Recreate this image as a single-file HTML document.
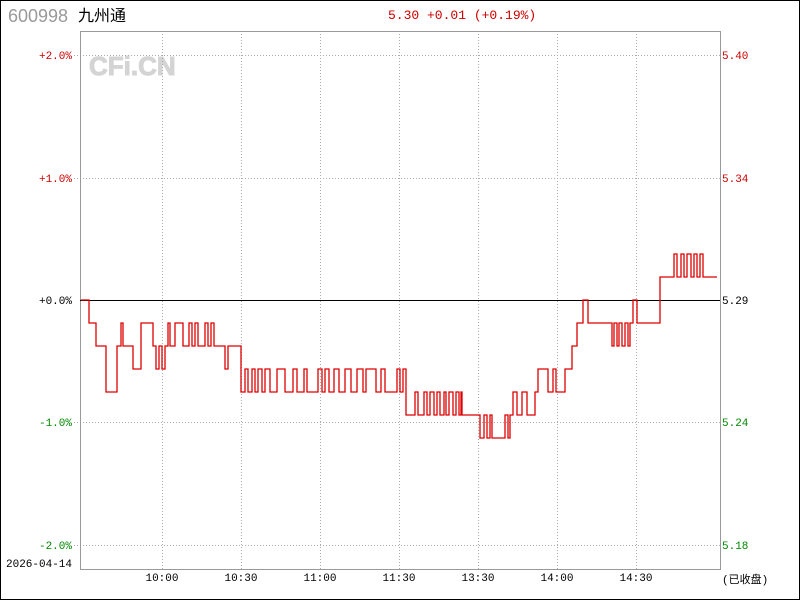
<!DOCTYPE html><html><head><style>
body{margin:0;width:800px;height:600px;overflow:hidden;background:#fff}
svg text{font-family:"Liberation Mono",monospace;font-size:11px}
</style></head><body>
<svg width="800" height="600" xmlns="http://www.w3.org/2000/svg">
<rect x="0.5" y="0.5" width="799" height="599" fill="#fff" stroke="#000"/>
<text x="8" y="22" style="font-family:'Liberation Sans',sans-serif;font-size:18px" fill="#999">600998</text>
<text x="78" y="21" style="font-family:'Liberation Sans','Noto Sans CJK SC',sans-serif;font-size:16px" fill="#000">九州通</text>
<text x="388" y="19" style="font-size:13px" fill="#c00">5.30 +0.01 (+0.19%)</text>
<text x="89" y="75" style="font-family:'Liberation Sans',sans-serif;font-size:26px;font-weight:900;stroke:#d4d4d4;stroke-width:1" fill="#d4d4d4">CFi.CN</text>
<g stroke="#aaa" stroke-dasharray="1,2" stroke-width="1">
<line x1="162.5" y1="31" x2="162.5" y2="569"/><line x1="241.5" y1="31" x2="241.5" y2="569"/><line x1="320.5" y1="31" x2="320.5" y2="569"/><line x1="399.5" y1="31" x2="399.5" y2="569"/><line x1="478.5" y1="31" x2="478.5" y2="569"/><line x1="557.5" y1="31" x2="557.5" y2="569"/><line x1="636.5" y1="31" x2="636.5" y2="569"/>
<line x1="74" y1="55.5" x2="720" y2="55.5"/><line x1="74" y1="178.5" x2="720" y2="178.5"/><line x1="74" y1="422.5" x2="720" y2="422.5"/><line x1="74" y1="545.5" x2="720" y2="545.5"/>
</g>
<path d="M80.5 31.5H720.5V569.5H80.5Z" fill="none" stroke="#999"/>
<line x1="80" y1="300.5" x2="720" y2="300.5" stroke="#000"/>
<path fill="none" stroke="#d00" stroke-width="1.3" d="M81 300H89V323H96V346H106V392H117V346H121V323H123V346H133V369H141V323H153V346H156V369H159V346H162V369H165V346H168V323H170V346H175V323H183V346H189V323H192V346H195V323H198V346H205V323H208V346H211V323H214V346H225V369H228V346H241V392H245V369H248V392H252V369H255V392H258V369H262V392H265V369H270V392H277V369H285V392H293V369H297V392H304V369H307V392H318V369H322V392H325V369H329V392H334V369H339V392H345V369H351V392H357V369H363V392H366V369H376V392H381V369H385V392H397V369H400V392H403V369H406V415H415V392H418V415H424V392H427V415H430V392H434V415H437V392H440V415H444V392H446V415H449V392H453V415H456V392H459V415H461V392H462V415H480V438H484V415H487V438H490V415H492V438H505V415H508V438H510V415H513V392H517V415H522V392H527V415H535V392H538V369H548V392H553V369H556V392H565V369H572V346H577V323H583V300H588V323H612V346H614V323H617V346H619V323H622V346H625V323H628V346H630V323H633V300H637V323H660V277H674V254H677V277H681V254H684V277H687V254H691V277H694V254H697V277H700V254H703V277H717"/>
<g text-anchor="end">
<text x="72" y="59" fill="#c00">+2.0%</text><text x="72" y="182" fill="#c00">+1.0%</text><text x="72" y="304" fill="#000">+0.0%</text><text x="72" y="426" fill="#080">-1.0%</text><text x="72" y="549" fill="#080">-2.0%</text>
</g>
<text x="722" y="59" fill="#c00">5.40</text><text x="722" y="182" fill="#c00">5.34</text><text x="722" y="304" fill="#000">5.29</text><text x="722" y="426" fill="#080">5.24</text><text x="722" y="549" fill="#080">5.18</text>
<text x="6" y="567" fill="#000">2026-04-14</text>
<g text-anchor="middle" fill="#000">
<text x="162" y="581">10:00</text><text x="241" y="581">10:30</text><text x="320" y="581">11:00</text><text x="399" y="581">11:30</text><text x="478" y="581">13:30</text><text x="557" y="581">14:00</text><text x="636" y="581">14:30</text>
</g>
<text x="722" y="583" style="font-family:'Liberation Mono','Noto Sans CJK SC',monospace;font-size:11px" fill="#000">(已收盘)</text>
</svg>
</body></html>
